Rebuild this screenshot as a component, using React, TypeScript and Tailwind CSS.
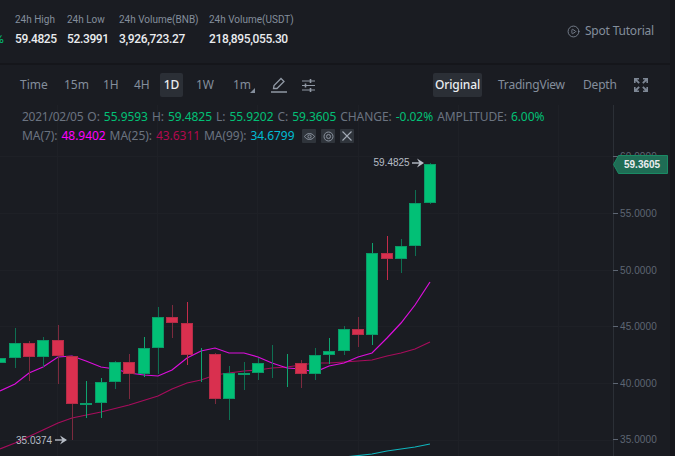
import { CirclePlay } from "lucide-react";

const GREEN = "#02c076";
const RED = "#d9304f";

// [center x, body top, body bottom, wick top, wick bottom, up?, bright wick?]
type Candle = [number, number, number, number, number, boolean, boolean?];

const candles: Candle[] = [
  [0, 358, 363, 358, 363, true],
  [15, 343, 358, 328, 368, true],
  [29, 343, 357, 341, 381, false],
  [43, 340, 357, 337, 367, true],
  [58, 340, 356, 325, 384, false],
  [72, 356, 404, 356, 440, false],
  [86, 403, 405, 381, 418, true, true],
  [101, 382, 403, 378, 418, true, true],
  [115, 362, 382, 361, 389, true],
  [129, 362, 374, 354, 399, false],
  [144, 348, 374, 337, 377, true, true],
  [158, 317, 348, 307, 374, true],
  [172, 317, 323, 305, 338, false],
  [187, 323, 355, 302, 365, false, true],
  [201, 354, 355, 348, 382, true, true],
  [215, 354, 399, 353, 404, false],
  [229, 373, 399, 366, 420, true],
  [244, 373, 375, 362, 390, true],
  [258, 363, 373, 358, 380, true],
  [272, 363, 364, 345, 378, true],
  [287, 363, 364, 354, 387, true, true],
  [301, 363, 374, 360, 388, false],
  [315, 355, 374, 348, 380, true],
  [329, 351, 355, 338, 364, true, true],
  [344, 329, 351, 326, 355, true],
  [358, 329, 335, 317, 347, false],
  [372, 253, 335, 243, 345, true, true],
  [387, 253, 259, 236, 280, false, true],
  [401, 246, 259, 239, 273, true],
  [415, 203, 246, 190, 256, true],
  [430, 164, 203, 163, 204, true],
];

const ma7 =
  "0,391 15,384 29,373 43,367 58,357 72,356 86,361 101,367 115,369 129,373 144,375 158,376 172,370 187,358 201,351 215,348 229,353 244,353 258,357 272,363 287,368 301,369 315,372 329,366 344,363 358,357 372,353 387,338 401,323 415,305 430,282";
const ma25 =
  "0,449 15,443 43,430 58,423 72,418 101,412 129,405 158,396 172,389 187,383 201,380 215,375 229,373 244,371 258,370 272,368 287,367 301,365 315,363 329,363 344,362 358,361 372,360 387,356 401,353 415,349 430,342";
const ma99 = "345,457 372,454 387,451 401,449 415,447 430,444";

const gridY = [156, 213, 270, 326, 383, 440];
const gridX = [57, 157, 257, 358, 458, 558];
const ticks = [
  { y: 156, label: "60.0000" },
  { y: 213, label: "55.0000" },
  { y: 270, label: "50.0000" },
  { y: 326, label: "45.0000" },
  { y: 383, label: "40.0000" },
  { y: 439, label: "35.0000" },
];

function Stat({ label, value, w }: { label: string; value: string; w: string }) {
  return (
    <div className={`${w} flex flex-col gap-[4px] whitespace-nowrap`}>
      <span className="text-[10px] leading-[14px] text-[#848e9c]">{label}</span>
      <span className="text-[12px] leading-[16px] font-medium tracking-[-0.35px] text-[#eaecef]">{value}</span>
    </div>
  );
}

function PencilIcon() {
  return (
    <svg width="18" height="18" viewBox="0 0 18 18" fill="none" stroke="#9098a4" strokeWidth="1.3">
      <path d="M3.5 12.5 L4 9.5 L11 2.5 L14 5.5 L7 12.5 Z" />
      <path d="M1 16 H17" strokeWidth="1.5" />
    </svg>
  );
}

function SlidersIcon() {
  return (
    <svg width="15" height="15" viewBox="0 0 15 15" fill="none" stroke="#9098a4" strokeWidth="1.2">
      <path d="M1 3 H14 M1 7.5 H14 M1 12 H14" />
      <path d="M9.5 1 V5 M4.5 5.5 V9.5 M9.5 10 V14" strokeWidth="1.6" />
    </svg>
  );
}

function ExpandIcon() {
  return (
    <svg width="14" height="14" viewBox="0 0 14 14" fill="#7d8694">
      <path d="M0 0 H5 V1.6 H3 L5.8 4.6 L4.6 5.8 L1.6 3 V5 H0 Z" />
      <path d="M14 0 H9 V1.6 H11 L8.2 4.6 L9.4 5.8 L12.4 3 V5 H14 Z" />
      <path d="M0 14 H5 V12.4 H3 L5.8 9.4 L4.6 8.2 L1.6 11 V9 H0 Z" />
      <path d="M14 14 H9 V12.4 H11 L8.2 9.4 L9.4 8.2 L12.4 11 V9 H14 Z" />
    </svg>
  );
}

function SmallButton({ children }: { children: React.ReactNode }) {
  return (
    <div className="flex h-[14px] w-[14px] items-center justify-center rounded-[1px] bg-[#2f343b]">
      {children}
    </div>
  );
}

function Arrow({ x, y }: { x: number; y: number }) {
  return (
    <g fill="#b7bdc6">
      <rect x={x} y={y - 0.7} width="8" height="1.4" />
      <path d={`M${x + 5} ${y - 4.5} L${x + 12} ${y} L${x + 5} ${y + 4.5} L${x + 7.5} ${y} Z`} />
    </g>
  );
}

export default function App() {
  return (
    <div className="flex h-[456px] w-[675px] overflow-hidden bg-[#15161b] font-['Noto_Sans',sans-serif]">
      <div className="flex w-[670px] flex-col bg-[#1a1c22]">
        {/* Ticker header */}
        <div className="flex h-[63px] shrink-0 items-start justify-between pt-[13px] pr-[16px] font-['Roboto',sans-serif]">
          <div className="flex">
            <div className="flex w-[15px] flex-col items-start gap-[4px]">
              <span className="h-[14px]" />
              <span className="w-[5px] overflow-hidden text-[12px] leading-[16px] text-[#02c076]">
                <span className="ml-[-5px]">%</span>
              </span>
            </div>
            <Stat w="w-[52px]" label="24h High" value="59.4825" />
            <Stat w="w-[52px]" label="24h Low" value="52.3991" />
            <Stat w="w-[90px]" label="24h Volume(BNB)" value="3,926,723.27" />
            <Stat w="w-[90px]" label="24h Volume(USDT)" value="218,895,055.30" />
          </div>
          <div className="mt-[10px] flex items-center gap-[5px] font-['Noto_Sans',sans-serif] text-[12px] leading-[16px] tracking-[-0.2px] text-[#848e9c]">
            <CirclePlay size={13} strokeWidth={1.5} />
            <span>Spot Tutorial</span>
          </div>
        </div>
        <div className="h-[2px] shrink-0 bg-[#15161b]" />

        {/* Toolbar */}
        <div className="flex h-[40px] shrink-0 items-center justify-between pr-[22px] pl-[20px] text-[12px] text-[#848e9c]">
          <div className="flex items-center">
            <span className="w-[44px]">Time</span>
            <span className="w-[39px]">15m</span>
            <span className="w-[31px]">1H</span>
            <span className="w-[26px]">4H</span>
            <span className="flex h-[24px] w-[23px] items-center justify-center rounded-[2px] bg-[#2b2f36] font-medium text-[#eaecef]">
              1D
            </span>
            <span className="ml-[13px] w-[37px]">1W</span>
            <span className="relative w-[37px]">
              1m
              <span className="absolute top-[12px] left-[17px] h-0 w-0 border-b-[5px] border-l-[5px] border-b-[#848e9c] border-l-transparent" />
            </span>
            <div className="flex items-center gap-[13px]">
              <PencilIcon />
              <SlidersIcon />
            </div>
          </div>
          <div className="flex items-center">
            <span className="flex h-[24px] w-[49px] items-center justify-center rounded-[2px] bg-[#2b2f36] font-medium tracking-[-0.1px] text-[#eaecef]">
              Original
            </span>
            <span className="ml-[16px] w-[85px] tracking-[-0.2px]">TradingView</span>
            <span className="w-[51px] tracking-[-0.2px]">Depth</span>
            <ExpandIcon />
          </div>
        </div>

        {/* Chart */}
        <div className="relative min-h-0 flex-1">
          <svg width="670" height="351" viewBox="0 105 670 351" className="block">
            <g stroke="#1e2026" strokeWidth="1" shapeRendering="crispEdges">
              {gridY.map((y) => (
                <line key={y} x1="0" x2="613" y1={y + 0.5} y2={y + 0.5} />
              ))}
              {gridX.map((x) => (
                <line key={x} x1={x + 0.5} x2={x + 0.5} y1="105" y2="456" />
              ))}
            </g>
            <line x1="613.5" x2="613.5" y1="105" y2="456" stroke="#2b2f36" shapeRendering="crispEdges" />

            {ticks.map((t) => (
              <g key={t.y}>
                <line x1="613" x2="618" y1={t.y + 0.5} y2={t.y + 0.5} stroke="#5e6673" shapeRendering="crispEdges" />
                <text x="620" y={t.y + 4} fontSize="10" letterSpacing="0.1" fill="#5e6673" fontFamily="'Liberation Sans', sans-serif">
                  {t.label}
                </text>
              </g>
            ))}

            <polyline points={ma25} fill="none" stroke="#a80c5c" strokeWidth="1.2" />
            <polyline points={ma7} fill="none" stroke="#dc0edc" strokeWidth="1.2" />
            <polyline points={ma99} fill="none" stroke="#0fb5bd" strokeWidth="1.2" />

            {candles.map(([x, top, bottom, wickTop, wickBottom, up, bright], i) => {
              const fill = up ? GREEN : RED;
              const edge = up ? "#0a9a68" : "#b52c47";
              const wick = bright ? (up ? "#0fa36f" : "#c32c4a") : up ? "#0e6f52" : "#7c2a3e";
              return (
                <g key={i} shapeRendering="crispEdges">
                  <line x1={x + 0.5} x2={x + 0.5} y1={wickTop} y2={wickBottom} stroke={wick} />
                  <rect x={x - 5.5} y={top + 0.5} width="11" height={Math.max(bottom - top - 1, 0)} fill={fill} stroke={edge} />
                </g>
              );
            })}

            <text x="373.5" y="166" fontSize="10" fill="#b7bdc6" fontFamily="'Liberation Sans', sans-serif">
              59.4825
            </text>
            <Arrow x={412} y={163} />
            <text x="16" y="444" fontSize="10" fill="#b7bdc6" fontFamily="'Liberation Sans', sans-serif">
              35.0374
            </text>
            <Arrow x={55} y={440} />

            <polygon points="613.5,164.5 618.5,155.5 667.5,155.5 667.5,173.5 618.5,173.5" fill="#1f6d55" stroke="#1a8a64" />
            <text x="624" y="168" fontSize="10" fontWeight="700" fill="#eaecef" fontFamily="'Liberation Sans', sans-serif">
              59.3605
            </text>
          </svg>

          {/* Legend over the chart */}
          <div className="absolute top-[4px] left-[22px] flex flex-col gap-[3px] text-[12px] leading-[16px] tracking-[-0.05px] whitespace-nowrap text-[#6b7380]">
            <div className="flex gap-[4px]">
              <span className="tracking-[-0.25px]">2021/02/05</span>
              <span>O:</span>
              <span className="text-[#02c076]">55.9593</span>
              <span>H:</span>
              <span className="text-[#02c076]">59.4825</span>
              <span>L:</span>
              <span className="text-[#02c076]">55.9202</span>
              <span>C:</span>
              <span className="text-[#02c076]">59.3605</span>
              <span>CHANGE:</span>
              <span className="text-[#02c076]">-0.02%</span>
              <span>AMPLITUDE:</span>
              <span className="text-[#02c076]">6.00%</span>
            </div>
            <div className="flex items-center gap-[4px]">
              <span>MA(7):</span>
              <span className="text-[#ff00ff]">48.9402</span>
              <span>MA(25):</span>
              <span className="text-[#b3094f]">43.6311</span>
              <span>MA(99):</span>
              <span className="text-[#00bcd4]">34.6799</span>
              <div className="ml-[4px] flex gap-[5px]">
                <SmallButton>
                  <svg width="11" height="9" viewBox="0 0 11 9" fill="none" stroke="#8a929e" strokeWidth="1">
                    <path d="M0.5 4.5 C3 0.5 8 0.5 10.5 4.5 C8 8.5 3 8.5 0.5 4.5 Z" />
                    <circle cx="5.5" cy="4.5" r="1.6" />
                  </svg>
                </SmallButton>
                <SmallButton>
                  <svg width="11" height="11" viewBox="0 0 11 11" fill="none" stroke="#8a929e" strokeWidth="1">
                    <circle cx="5.5" cy="5.5" r="4.5" />
                    <circle cx="5.5" cy="5.5" r="2" />
                  </svg>
                </SmallButton>
                <SmallButton>
                  <svg width="10" height="10" viewBox="0 0 10 10" fill="none" stroke="#a4abb6" strokeWidth="1.1">
                    <path d="M0.5 0.5 L9.5 9.5 M9.5 0.5 L0.5 9.5" />
                  </svg>
                </SmallButton>
              </div>
            </div>
          </div>
        </div>
      </div>
    </div>
  );
}
